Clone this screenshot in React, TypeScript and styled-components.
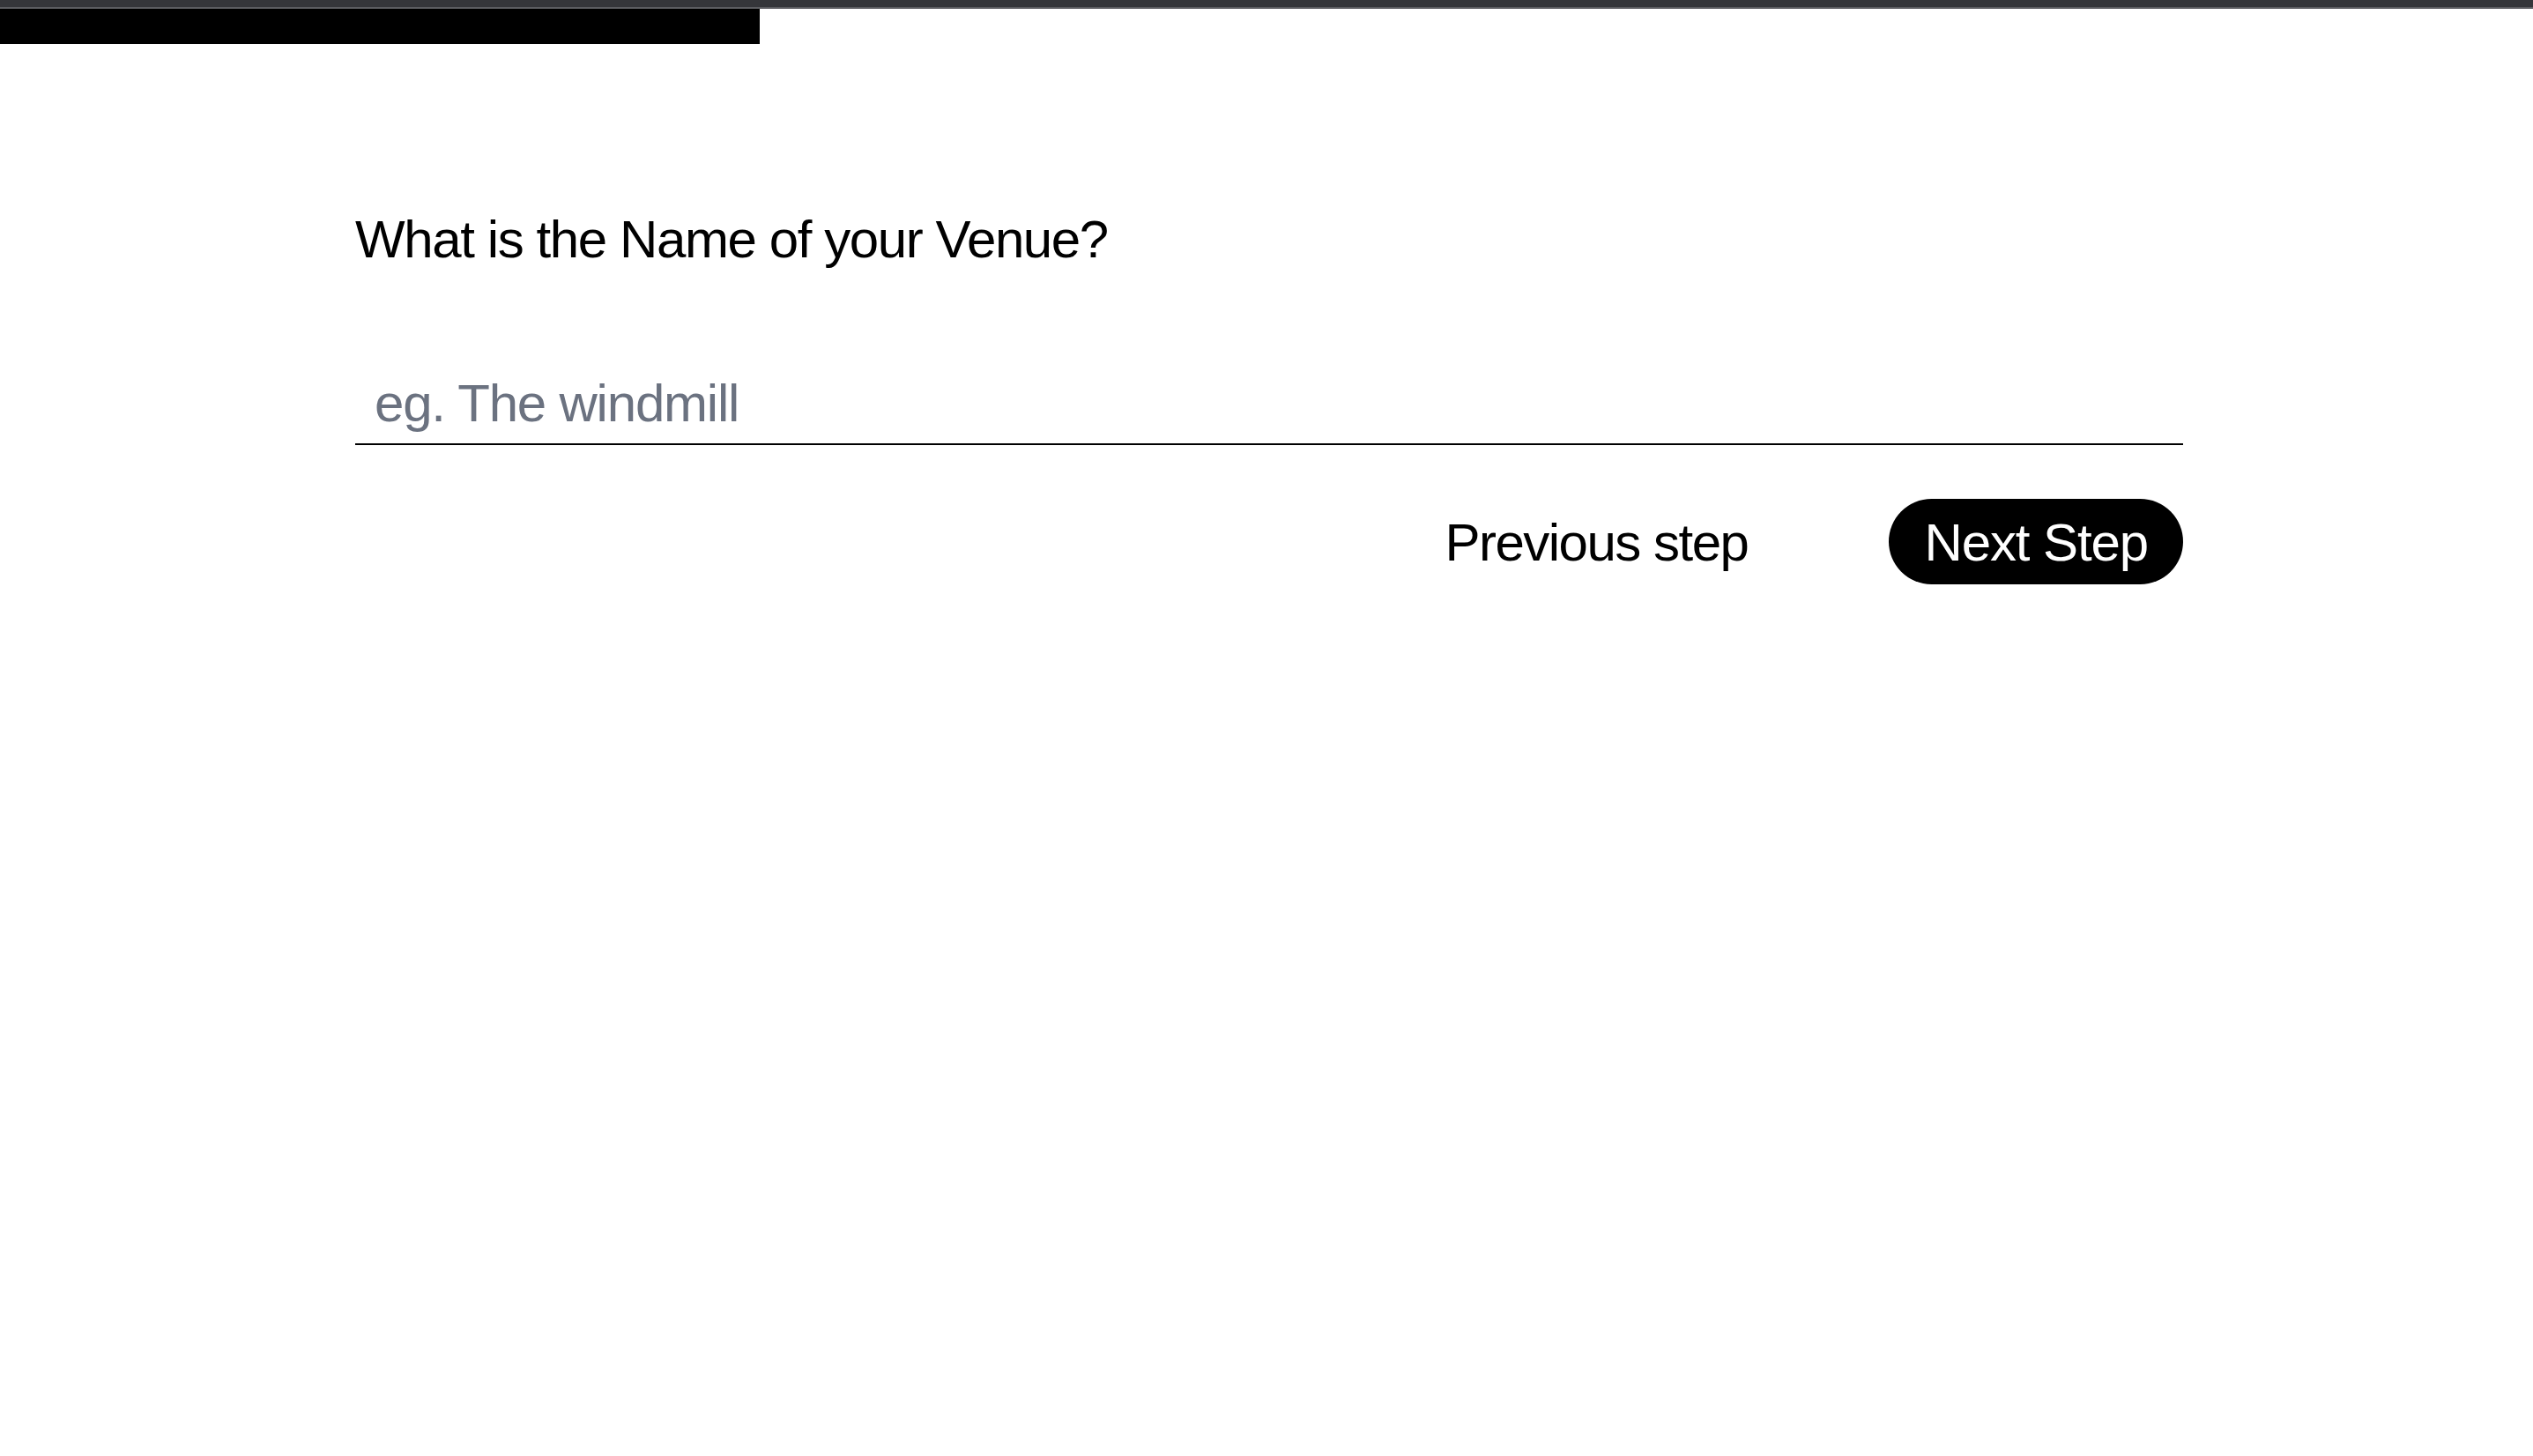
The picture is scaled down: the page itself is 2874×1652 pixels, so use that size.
import React from 'react'
import styled, { createGlobalStyle } from 'styled-components'

const GlobalStyle = createGlobalStyle`
  html, body {
    margin: 0;
    padding: 0;
    background: #ffffff;
    font-family: 'Liberation Sans', Arial, sans-serif;
  }
  * {
    box-sizing: border-box;
  }
`

const Chrome = styled.div`
  height: 10px;
  background: #35363a;
  border-bottom: 2px solid #5c5d61;
`

const ProgressTrack = styled.div`
  height: 40px;
  background: #ffffff;
`

const ProgressFill = styled.div`
  height: 100%;
  background: #000000;
`

const Main = styled.main`
  width: 2074px;
  margin: 192px 0 0 403px;
  display: flex;
  flex-direction: column;
`

const Question = styled.h1`
  margin: 0;
  font: 400 60px/60px 'Liberation Sans', Arial, sans-serif;
  letter-spacing: -1.4px;
  color: #000000;
`

const TextInput = styled.input`
  margin-top: 109px;
  width: 100%;
  height: 94px;
  padding: 16px 22px;
  border: none;
  border-bottom: 2px solid #000000;
  outline: none;
  background: transparent;
  font: 400 60px/60px 'Liberation Sans', Arial, sans-serif;
  letter-spacing: -1.2px;
  color: #000000;
  &::placeholder {
    color: #6b7280;
  }
`

const Actions = styled.div`
  margin-top: 61px;
  display: flex;
  justify-content: flex-end;
  align-items: center;
  gap: 116px;
`

const StepButton = styled.button<{ $primary?: boolean }>`
  border: none;
  cursor: pointer;
  height: 97px;
  padding: 2px ${(p) => (p.$primary ? '40px' : '44px')} 0;
  border-radius: 9999px;
  font: 400 60px/60px 'Liberation Sans', Arial, sans-serif;
  letter-spacing: ${(p) => (p.$primary ? '-1.1px' : '-1.5px')};
  background: ${(p) => (p.$primary ? '#000000' : 'transparent')};
  color: ${(p) => (p.$primary ? '#ffffff' : '#000000')};
`

export default function App() {
  const progress = 0.3
  return (
    <>
      <GlobalStyle />
      <Chrome />
      <ProgressTrack>
        <ProgressFill style={{ width: `${progress * 100}%` }} />
      </ProgressTrack>
      <Main>
        <Question>What is the Name of your Venue?</Question>
        <TextInput type='text' placeholder='eg. The windmill' />
        <Actions>
          <StepButton>Previous step</StepButton>
          <StepButton $primary>Next Step</StepButton>
        </Actions>
      </Main>
    </>
  )
}
